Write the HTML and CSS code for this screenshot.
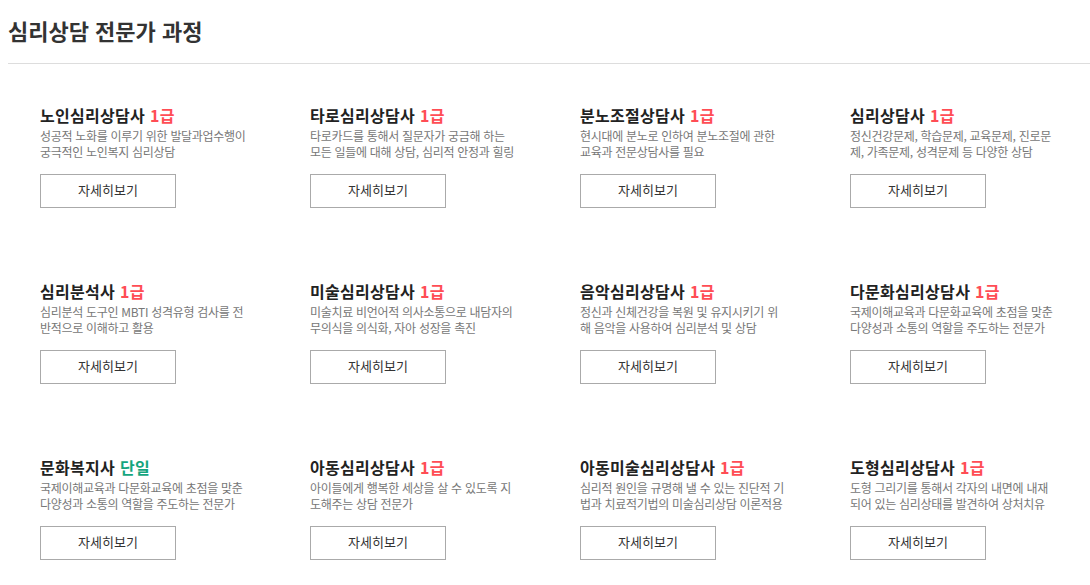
FILE: index.html
```html
<!DOCTYPE html>
<html lang="ko">
<head>
    <meta charset="utf-8">
    <title>심리상담 전문가 과정</title>
    <link rel="stylesheet" href="styles.css">
</head>
<body>
    <div class="page-head">
        <h1>심리상담 전문가 과정</h1>
    </div>

    <div class="course-grid">
        <div class="course">
            <h3>노인심리상담사 <span class="grade">1급</span></h3>
            <p class="desc">성공적 노화를 이루기 위한 발달과업수행이 궁극적인 노인복지 심리상담</p>
            <a class="more" href="#">자세히보기</a>
        </div>
        <div class="course">
            <h3>타로심리상담사 <span class="grade">1급</span></h3>
            <p class="desc">타로카드를 통해서 질문자가 궁금해 하는 모든 일들에 대해 상담, 심리적 안정과 힐링을 돕는 전문가</p>
            <a class="more" href="#">자세히보기</a>
        </div>
        <div class="course">
            <h3>분노조절상담사 <span class="grade">1급</span></h3>
            <p class="desc">현시대에 분노로 인하여 분노조절에 관한 교육과 전문상담사를 필요</p>
            <a class="more" href="#">자세히보기</a>
        </div>
        <div class="course">
            <h3>심리상담사 <span class="grade">1급</span></h3>
            <p class="desc">정신건강문제, 학습문제, 교육문제, 진로문제, 가족문제, 성격문제 등 다양한 상담</p>
            <a class="more" href="#">자세히보기</a>
        </div>

        <div class="course">
            <h3>심리분석사 <span class="grade">1급</span></h3>
            <p class="desc">심리분석 도구인 MBTI 성격유형 검사를 전반적으로 이해하고 활용</p>
            <a class="more" href="#">자세히보기</a>
        </div>
        <div class="course">
            <h3>미술심리상담사 <span class="grade">1급</span></h3>
            <p class="desc">미술치료 비언어적 의사소통으로 내담자의 무의식을 의식화, 자아 성장을 촉진</p>
            <a class="more" href="#">자세히보기</a>
        </div>
        <div class="course">
            <h3>음악심리상담사 <span class="grade">1급</span></h3>
            <p class="desc">정신과 신체건강을 복원 및 유지시키기 위해 음악을 사용하여 심리분석 및 상담</p>
            <a class="more" href="#">자세히보기</a>
        </div>
        <div class="course">
            <h3>다문화심리상담사 <span class="grade">1급</span></h3>
            <p class="desc">국제이해교육과 다문화교육에 초점을 맞춘 다양성과 소통의 역할을 주도하는 전문가</p>
            <a class="more" href="#">자세히보기</a>
        </div>

        <div class="course">
            <h3>문화복지사 <span class="grade single">단일</span></h3>
            <p class="desc">국제이해교육과 다문화교육에 초점을 맞춘 다양성과 소통의 역할을 주도하는 전문가</p>
            <a class="more" href="#">자세히보기</a>
        </div>
        <div class="course">
            <h3>아동심리상담사 <span class="grade">1급</span></h3>
            <p class="desc">아이들에게 행복한 세상을 살 수 있도록 지도해주는 상담 전문가</p>
            <a class="more" href="#">자세히보기</a>
        </div>
        <div class="course">
            <h3>아동미술심리상담사 <span class="grade">1급</span></h3>
            <p class="desc">심리적 원인을 규명해 낼 수 있는 진단적 기법과 치료적기법의 미술심리상담 이론적용</p>
            <a class="more" href="#">자세히보기</a>
        </div>
        <div class="course">
            <h3>도형심리상담사 <span class="grade">1급</span></h3>
            <p class="desc">도형 그리기를 통해서 각자의 내면에 내재되어 있는 심리상태를 발견하여 상처치유</p>
            <a class="more" href="#">자세히보기</a>
        </div>
    </div>
</body>
</html>
```

FILE: styles.css
```css
body {
    margin: 8px 0 0 8px;
    font-family: "Noto Sans CJK KR", "Noto Sans", sans-serif;
    color: #333;
    background: #fff;
}
.page-head {
    padding: 6px 0 17px;
    border-bottom: 1px solid #ddd;
}
.page-head h1 {
    margin: 0;
    font-size: 22px;
    line-height: 32px;
    font-weight: 700;
    color: #333;
}
.course-grid {
    display: grid;
    grid-template-columns: repeat(4, 270px);
    row-gap: 72px;
    padding: 40px 0 0 32px;
}
.course h3 {
    margin: 0;
    font-size: 16px;
    line-height: 22px;
    font-weight: 700;
    letter-spacing: 0.3px;
    color: #222;
}
.grade {
    color: #ff4d55;
}
.grade.single {
    color: #15a57e;
}
.desc {
    width: 206px;
    height: 32px;
    margin: 2px 0 14px;
    overflow: hidden;
    font-size: 12px;
    line-height: 16px;
    letter-spacing: -0.3px;
    color: #777;
}
.more {
    display: block;
    width: 134px;
    height: 32px;
    border: 1px solid #aaa;
    line-height: 30px;
    text-align: center;
    font-size: 13px;
    color: #333;
    text-decoration: none;
}
```
